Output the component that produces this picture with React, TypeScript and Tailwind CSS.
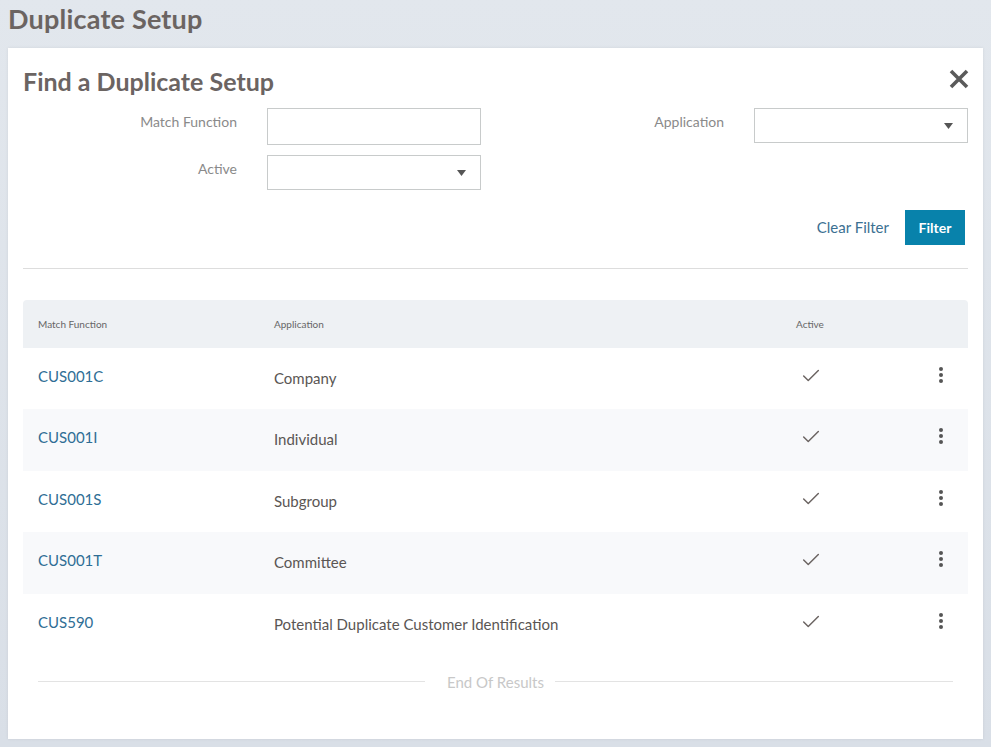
import { Check } from 'lucide-react';

interface Row {
  code: string;
  application: string;
  active: boolean;
}

const rows: Row[] = [
  { code: 'CUS001C', application: 'Company', active: true },
  { code: 'CUS001I', application: 'Individual', active: true },
  { code: 'CUS001S', application: 'Subgroup', active: true },
  { code: 'CUS001T', application: 'Committee', active: true },
  { code: 'CUS590', application: 'Potential Duplicate Customer Identification', active: true },
];

function Caret() {
  return (
    <svg width="9" height="6" viewBox="0 0 9 6" className="text-[#555]">
      <path d="M0 0 H9 L4.5 6 Z" fill="currentColor" />
    </svg>
  );
}

function Kebab() {
  return (
    <div className="flex flex-col items-center gap-[2px]">
      <span className="w-[4px] h-[4px] rounded-full bg-[#555]" />
      <span className="w-[4px] h-[4px] rounded-full bg-[#555]" />
      <span className="w-[4px] h-[4px] rounded-full bg-[#555]" />
    </div>
  );
}

export default function App() {
  return (
    <div
      className="h-[747px] w-full bg-gradient-to-b from-[#e2e7ed] to-[#d9dfe7] px-[8px] flex flex-col overflow-hidden"
      style={{ fontFamily: 'Lato, "Open Sans", sans-serif' }}
    >
      <h1 className="h-[48px] pt-[2px] text-[27px] leading-[34px] font-bold text-[#6b6462] tracking-[0.2px]">Duplicate Setup</h1>

      <div className="bg-white w-[975px] h-[691px] px-[15px] pt-[19px] shadow-[0_0_3px_rgba(0,0,0,0.08)]">
        <div className="flex items-center justify-between">
          <h2 className="text-[25px] leading-[28px] font-bold text-[#6b6462]">Find a Duplicate Setup</h2>
          <svg width="22" height="22" viewBox="0 0 22 22" className="mr-[-2px] mt-[-4px]">
            <path d="M3 3 L19 19 M19 3 L3 19" stroke="#5a5a5a" strokeWidth="3.6" />
          </svg>
        </div>

        <div className="mt-[13px] grid grid-cols-2 gap-x-[29px] w-[945px]">
          <div className="grid grid-cols-[1fr_214px] gap-x-[30px] gap-y-[10px]">
            <label className="text-right text-[14px] leading-5 pt-[4px] text-[#8a8a8a]">Match Function</label>
            <input className="h-[37px] border border-[#c8cbcb] outline-none px-2" />
            <label className="text-right text-[14px] leading-5 pt-[4px] text-[#8a8a8a]">Active</label>
            <div className="h-[35px] border border-[#c8cbcb] flex items-center justify-end pr-[14px]">
              <Caret />
            </div>
          </div>
          <div className="grid grid-cols-[1fr_214px] gap-x-[30px] content-start">
            <label className="text-right text-[14px] leading-5 pt-[4px] text-[#8a8a8a]">Application</label>
            <div className="h-[35px] border border-[#c8cbcb] flex items-center justify-end pr-[14px]">
              <Caret />
            </div>
          </div>
        </div>

        <div className="mt-[20px] flex items-center justify-end gap-[16px] pr-[3px]">
          <button className="text-[15px] text-[#3b7092]">Clear Filter</button>
          <button className="w-[60px] h-[35px] bg-[#0882ab] text-white text-[14px] font-bold">Filter</button>
        </div>

        <div className="mt-[23px] h-px bg-[#dddddd]" />

        <div className="mt-[31px]">
          <div className="h-[48px] bg-[#eef1f4] rounded-t-[4px] grid grid-cols-[236px_522px_60px_1fr] items-center text-[10px] text-[#666]">
            <div className="pl-[15px]">Match Function</div>
            <div className="pl-[15px]">Application</div>
            <div className="pl-[15px]">Active</div>
            <div />
          </div>
          {rows.map((row, index) => (
            <div
              key={row.code}
              className={`h-[61.4px] grid grid-cols-[236px_522px_60px_1fr] items-start ${
                index % 2 === 1 ? 'bg-[#f8f9fb]' : 'bg-white'
              }`}
            >
              <div className="pl-[15px] pt-[18px] text-[15px] leading-5 text-[#2f6e95]">{row.code}</div>
              <div className="pl-[15px] pt-[20px] text-[15px] leading-5 text-[#5a5654]">{row.application}</div>
              <div className="pl-[19px] pt-[17px] text-[#6b6462]">
                {row.active && <Check size={22} strokeWidth={1.6} />}
              </div>
              <div className="flex justify-end pr-[25px] pt-[19px]">
                <Kebab />
              </div>
            </div>
          ))}
        </div>

        <div className="mt-[17px] mx-[15px] flex items-center">
          <div className="w-[387px] h-px bg-[#e3e3e3]" />
          <span className="ml-[22px] mr-[11px] text-[15px] leading-5 text-[#c8c8c8]">End Of Results</span>
          <div className="flex-1 h-px bg-[#e3e3e3]" />
        </div>
      </div>
    </div>
  );
}
